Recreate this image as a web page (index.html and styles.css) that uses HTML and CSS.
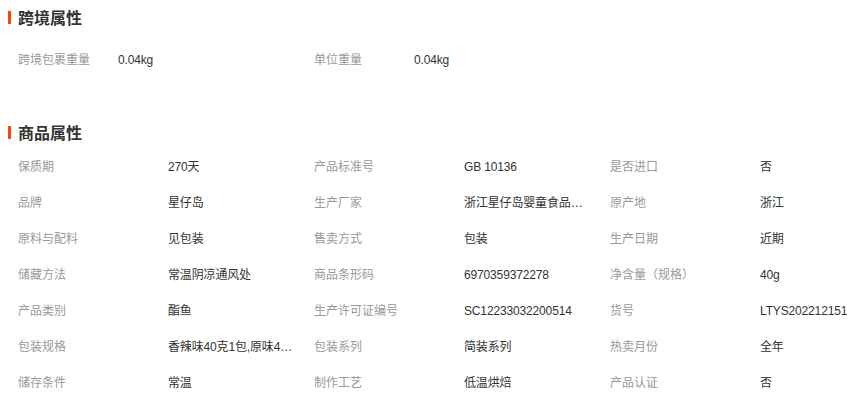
FILE: index.html
```html
<!DOCTYPE html>
<html lang="zh-CN">
<head>
<meta charset="utf-8">
<title>属性</title>
<link rel="stylesheet" href="styles.css">
</head>
<body>
<section class="sec sec-cross">
  <h2 class="title">跨境属性</h2>
  <div class="grid">
    <div class="item item-short"><span class="label">跨境包裹重量</span><span class="value">0.04kg</span></div>
    <div class="item item-short"><span class="label">单位重量</span><span class="value">0.04kg</span></div>
  </div>
</section>
<section class="sec sec-goods">
  <h2 class="title">商品属性</h2>
  <div class="grid">
    <div class="item"><span class="label">保质期</span><span class="value">270天</span></div>
    <div class="item"><span class="label">产品标准号</span><span class="value">GB 10136</span></div>
    <div class="item"><span class="label">是否进口</span><span class="value">否</span></div>
    <div class="item"><span class="label">品牌</span><span class="value">星仔岛</span></div>
    <div class="item"><span class="label">生产厂家</span><span class="value">浙江星仔岛婴童食品有限公司</span></div>
    <div class="item"><span class="label">原产地</span><span class="value">浙江</span></div>
    <div class="item"><span class="label">原料与配料</span><span class="value">见包装</span></div>
    <div class="item"><span class="label">售卖方式</span><span class="value">包装</span></div>
    <div class="item"><span class="label">生产日期</span><span class="value">近期</span></div>
    <div class="item"><span class="label">储藏方法</span><span class="value">常温阴凉通风处</span></div>
    <div class="item"><span class="label">商品条形码</span><span class="value">6970359372278</span></div>
    <div class="item"><span class="label">净含量（规格）</span><span class="value">40g</span></div>
    <div class="item"><span class="label">产品类别</span><span class="value">酯鱼</span></div>
    <div class="item"><span class="label">生产许可证编号</span><span class="value">SC12233032200514</span></div>
    <div class="item"><span class="label">货号</span><span class="value">LTYS202212151</span></div>
    <div class="item"><span class="label">包装规格</span><span class="value">香辣味40克1包,原味40克1包</span></div>
    <div class="item"><span class="label">包装系列</span><span class="value">简装系列</span></div>
    <div class="item"><span class="label">热卖月份</span><span class="value">全年</span></div>
    <div class="item"><span class="label">储存条件</span><span class="value">常温</span></div>
    <div class="item"><span class="label">制作工艺</span><span class="value">低温烘焙</span></div>
    <div class="item"><span class="label">产品认证</span><span class="value">否</span></div>
  </div>
</section>
</body>
</html>
```
FILE: styles.css
```css
html, body {
  margin: 0;
  padding: 0;
  background: #fff;
}
body {
  font-family: "Liberation Sans", "Noto Sans CJK SC", sans-serif;
  font-size: 12px;
  color: #333;
  width: 857px;
  overflow: hidden;
}
.title {
  display: flex;
  align-items: center;
  margin: 0;
  height: 34px;
  padding-left: 8px;
  font-size: 16px;
  font-weight: bold;
  color: #333;
}
.title::before {
  content: "";
  width: 3px;
  height: 13px;
  background: #ff4400;
  margin-right: 7px;
}
.sec-cross .grid {
  margin-top: 8px;
}
.sec-goods {
  margin-top: 37px;
}
.grid {
  display: grid;
  grid-template-columns: 296px 296px 1fr;
  padding-left: 18px;
}
.item {
  display: flex;
  height: 36px;
  line-height: 36px;
  white-space: nowrap;
  min-width: 0;
}
.label {
  width: 150px;
  flex: none;
  color: #999;
}
.item-short .label {
  width: 100px;
}
.value {
  color: #333;
  max-width: 128px;
  overflow: hidden;
  text-overflow: ellipsis;
  letter-spacing: -0.15px;
}
```
